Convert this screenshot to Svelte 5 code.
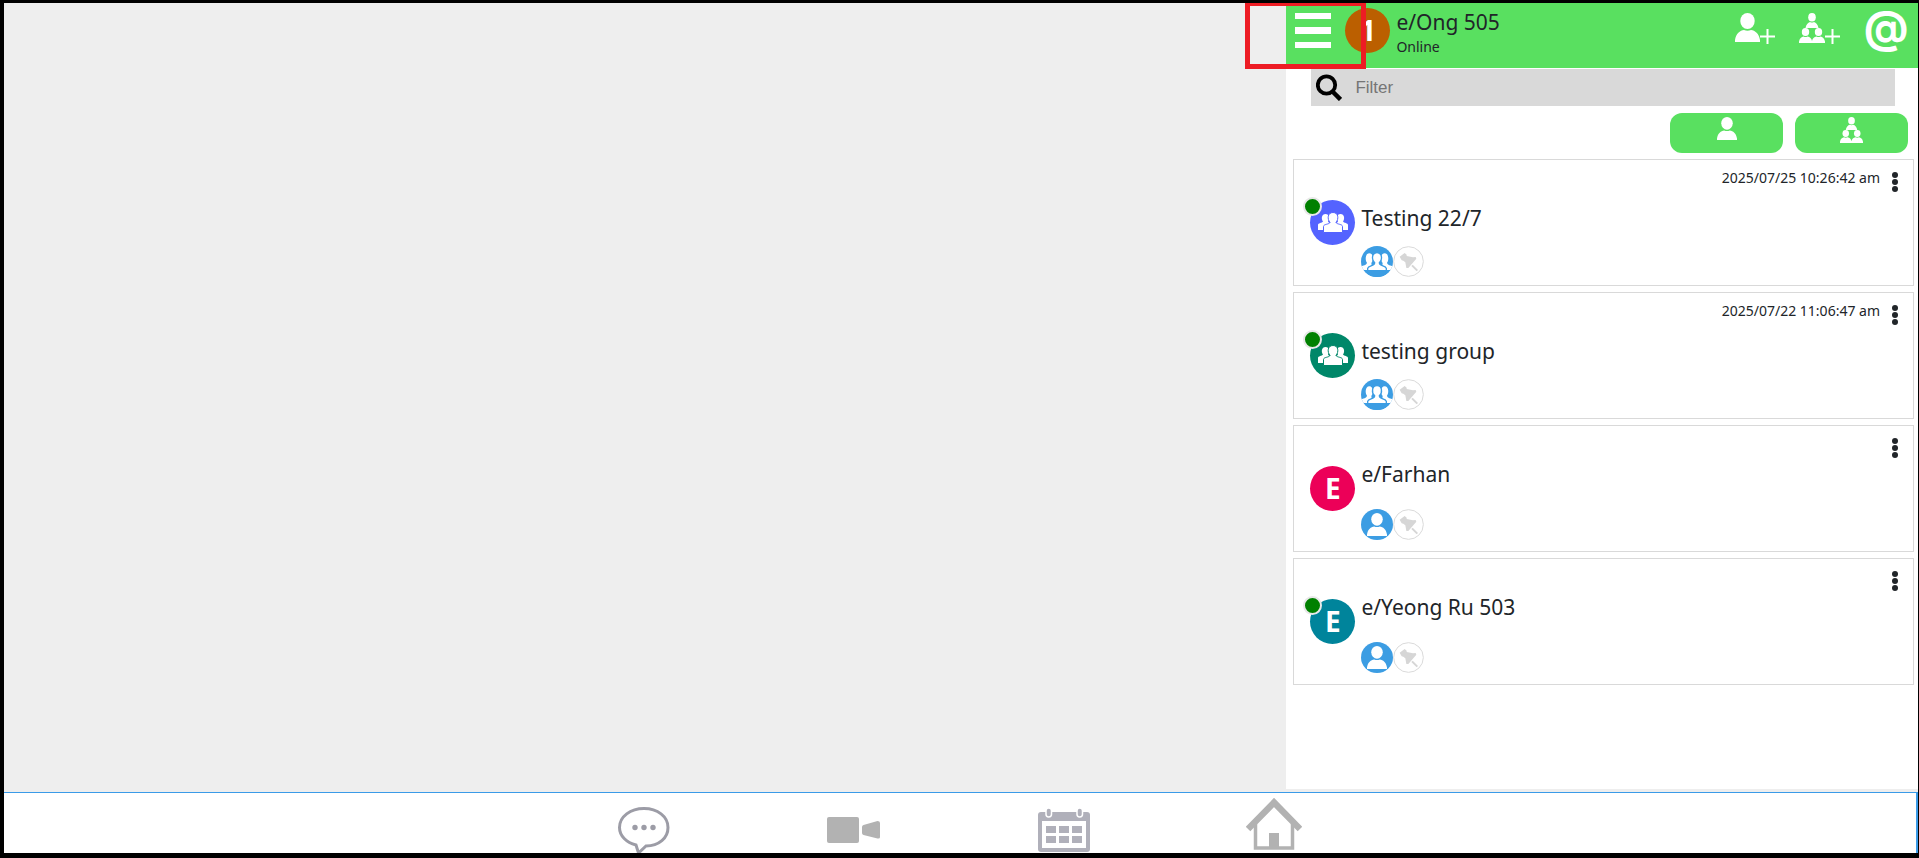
<script>
  const chats = [
    { name: 'Testing 22/7', time: '2025/07/25 10:26:42 am', color: '#5463ff', group: true, online: true },
    { name: 'testing group', time: '2025/07/22 11:06:47 am', color: '#008769', group: true, online: true },
    { name: 'e/Farhan', time: '', color: '#ec0058', group: false, online: false },
    { name: 'e/Yeong Ru 503', time: '', color: '#00849b', group: false, online: true }
  ];
  let filter = $state('');
  const shown = $derived(chats.filter((c) => c.name.toLowerCase().includes(filter.toLowerCase())));
</script>

{#snippet person(w, h)}
  <svg width={w} height={h} viewBox="0 0 25 29" preserveAspectRatio="none" fill="#fff" aria-hidden="true">
    <ellipse cx="12.5" cy="8" rx="7.2" ry="8" />
    <path d="M0 29V27C1 20.500 5 17.500 9 17Q12.500 18.500 16 17C20 17.500 24 20.500 25 27V29Z" />
  </svg>
{/snippet}

{#snippet team(w, h)}
  <svg width={w} height={h} viewBox="0 0 26 30" preserveAspectRatio="none" fill="#fff" aria-hidden="true">
    <ellipse cx="13" cy="4.300" rx="3.800" ry="4.300" />
    <path d="M6.500 15C7 11.500 9 9.500 11 9Q13 10 15 9C17 9.500 19 11.500 19.500 15Z" />
    <ellipse cx="6.500" cy="19" rx="3.700" ry="4" />
    <ellipse cx="19.500" cy="19" rx="3.700" ry="4" />
    <path d="M0 30V28.500C.5 25.500 2.500 24 4.500 23.500Q6.500 24.500 8.500 23.500C11 24 12.500 25.500 13 28C13.500 25.500 15 24 17.500 23.500Q19.500 24.500 21.500 23.500C23.500 24 25.500 25.500 26 28.500V30Z" />
  </svg>
{/snippet}

{#snippet plus()}
  <svg class="plus" width="15" height="15" viewBox="0 0 15 15" aria-hidden="true">
    <path d="M7.500 0V15M0 7.500H15" stroke="#fff" stroke-width="2" />
  </svg>
{/snippet}

{#snippet crowd(bg)}
  <svg width="30" height="21" viewBox="0 0 30 21" fill="#fff" aria-hidden="true">
    <path d="M0 18V13C0 11 4 11 5 9.500C3 7 3.500 2 7.500 2S12 7 10 9.500L12 12V18Z" />
    <path d="M30 18V13C30 11 26 11 25 9.500C27 7 26.500 2 22.500 2S18 7 20 9.500L18 12V18Z" />
    <path d="M5.500 20.500V14.500C5.500 12 11 12.500 12 10.500C9 7 9.500 0.500 15 .5S21 7 18 10.500C19 12.500 24.500 12 24.500 14.500V20.500Z" stroke={bg} stroke-width="1" />
  </svg>
{/snippet}

{#snippet crowdBadge()}
  <svg width="32" height="31" viewBox="0 0 96 93" fill="#fff" aria-hidden="true">
    <path d="M0 72V62C6 57 17 58 18 50C12 44 12 22 25 22S38 44 31 51L34 72Z" />
    <path d="M96 72V62C90 57 79 58 78 50C84 44 84 22 71 22S58 44 65 51L62 72Z" />
    <path d="M20 75V67C22 58 41 61 41 50C31 42 32 20 48 20S65 42 55 50C55 61 74 58 76 67V75Z" stroke="#3c9de3" stroke-width="4" />
    <path d="M0 72H96V93H0Z" fill="#3c9de3" />
  </svg>
{/snippet}

<div class="app">
  <div class="main">
    <main class="stage"></main>
    <aside class="sidebar">
      <header>
        <button class="menu" aria-label="Menu">
          <svg width="36" height="36" viewBox="0 0 36 36" fill="#fff" aria-hidden="true">
            <rect width="36" height="6" /><rect y="14" width="36" height="7" /><rect y="29" width="36" height="6" />
          </svg>
        </button>
        <span class="avatar me">1</span>
        <div class="who">
          <div class="name">e/Ong 505</div>
          <div class="state">Online</div>
        </div>
        <div class="actions">
          <button aria-label="Add contact">{@render person(25, 29)}{@render plus()}</button>
          <button aria-label="Add group">{@render team(26, 30)}{@render plus()}</button>
          <button class="at" aria-label="Mentions">@</button>
        </div>
        <div class="marker"></div>
      </header>

      <label class="search">
        <svg width="26" height="27" viewBox="0 0 26 27" fill="none" stroke="#000" aria-hidden="true">
          <circle cx="10.500" cy="11" r="8.700" stroke-width="3.800" />
          <path d="M16.500 17.500L24.500 25.500" stroke-width="4.500" />
        </svg>
        <input type="text" placeholder="Filter" aria-label="Filter" bind:value={filter} />
      </label>

      <div class="kinds">
        <button aria-label="Contacts">{@render person(20, 23)}</button>
        <button aria-label="Groups">{@render team(23, 26)}</button>
      </div>

      <div class="list">
        {#each shown as chat}
          <article class="card">
            <div class="top">
              <time>{chat.time}</time>
              <button class="more" aria-label="More options">
                <svg width="6" height="20" viewBox="0 0 6 20" fill="#212529" aria-hidden="true">
                  <circle cx="3" cy="3" r="3" /><circle cx="3" cy="10" r="3" /><circle cx="3" cy="17" r="3" />
                </svg>
              </button>
            </div>
            <div class="row">
              <span class="avatar" style="background:{chat.color}">
                {#if chat.group}{@render crowd(chat.color)}{:else}E{/if}
                {#if chat.online}<span class="dot"></span>{/if}
              </span>
              <div class="info" class:group={chat.group}>
                <div class="title">{chat.name}</div>
                <div class="badges">
                  <span class="badge">
                    {#if chat.group}{@render crowdBadge()}{:else}{@render person(20, 23)}{/if}
                  </span>
                  <button class="pin" aria-label="Pin chat">
                    <svg width="31" height="31" viewBox="0 0 93 93" aria-hidden="true">
                      <circle cx="46.500" cy="46.500" r="44.500" fill="#fff" stroke="#dadada" stroke-width="3" />
                      <path d="M20 32L35 21L41 26L41 30L60 34L68 33L70 38L46 66L40 66L37 49L31 44L26 43Z" fill="#d6d6d6" />
                      <path d="M57 58L73 74" stroke="#d6d6d6" stroke-width="6" />
                    </svg>
                  </button>
                </div>
              </div>
            </div>
          </article>
        {/each}
      </div>
    </aside>
  </div>

  <nav>
    <a href="#chat" aria-label="Chat">
      <svg width="52" height="48" viewBox="0 0 52 48" fill="none" aria-hidden="true">
        <path d="M26 1.500C12.500 1.500 1.500 9.500 1.500 20.500C1.500 29 8.500 35.500 18 38L20.500 46L28 39C41 39 50 31 50 20.500C50 9.500 39.500 1.500 26 1.500Z" stroke="#9c9ca6" stroke-width="3" />
        <g fill="#9c9ca6"><circle cx="17" cy="20.500" r="2.700" /><circle cx="26" cy="20.500" r="2.700" /><circle cx="35" cy="20.500" r="2.700" /></g>
      </svg>
    </a>
    <a href="#video" aria-label="Video call">
      <svg width="53" height="46" viewBox="0 0 53 46" fill="#b2b2b2" aria-hidden="true">
        <rect y="10" width="32" height="26" rx="2" />
        <path d="M36.500 18L50.500 14Q53 14 53 16V30Q53 32 50.500 31.500L36.500 28Q35 27.500 35 26V20Q35 18.500 36.500 18Z" />
      </svg>
    </a>
    <a href="#calendar" aria-label="Calendar">
      <svg width="52" height="46" viewBox="0 0 52 46" fill="#b0b0ba" aria-hidden="true">
        <rect y="5" width="52" height="40" rx="3" />
        <rect x="4" y="14" width="44" height="27" fill="#fff" />
        <rect x="8" y="1" width="5.500" height="9" rx="2.700" stroke="#fff" stroke-width="1.500" />
        <rect x="39" y="1" width="5.500" height="9" rx="2.700" stroke="#fff" stroke-width="1.500" />
        <path d="M8 19H18V26H8ZM21 19H31V26H21ZM34 19H44V26H34ZM8 29H18V36H8ZM21 29H31V36H21ZM34 29H44V36H34Z" />
      </svg>
    </a>
    <a href="#home" aria-label="Home">
      <svg width="56" height="54" viewBox="0 0 56 54" fill="none" stroke="#b2b2b2" aria-hidden="true">
        <path d="M2 32L28 5.500L54 32" stroke-width="6.500" />
        <path d="M9.500 27V51H46.500V27" stroke-width="3.500" />
        <rect x="23" y="36" width="10" height="15" fill="#b2b2b2" stroke="none" />
      </svg>
    </a>
  </nav>
</div>

<style>
  :global(body) { margin: 0; background: #000; }
  * { box-sizing: border-box; }
  svg { display: block; flex: none; }
  button { display: flex; align-items: center; justify-content: center; padding: 0; border: 0; background: none; color: inherit; font: inherit; cursor: pointer; }
  .app {
    display: flex;
    flex-direction: column;
    height: 100vh;
    min-height: 760px;
    border: solid #000;
    border-width: 3px 1px 5px 4px;
    background: #eee;
    color: #212529;
    font-family: "Noto Sans", "Segoe UI", sans-serif;
  }
  .main { display: flex; flex: 1; min-height: 0; padding-bottom: 3px; }
  .stage { flex: 1; background: #eee; }
  .sidebar { display: flex; flex-direction: column; width: 33%; background: #fff; }

  header { position: relative; display: flex; align-items: flex-start; height: 65px; padding: 5px 10px 0 9px; background: #59e060; }
  .menu { padding-top: 5px; margin-right: 14px; }
  .avatar { position: relative; display: flex; flex: none; align-items: center; justify-content: center; width: 45px; height: 45px; border-radius: 50%; color: #fff; font: bold 28px/45px "Noto Sans", sans-serif; }
  .me { background: #bb5f00; }
  .who { flex: 1; margin-left: 6px; }
  .name { font-size: 21px; line-height: 28px; }
  .state { font-size: 14px; line-height: 22px; }
  .actions { display: flex; align-items: flex-start; gap: 24px; }
  .actions button { align-items: flex-start; padding-top: 5px; }
  .plus { margin-top: 16px; }
  .actions .at { width: 44px; height: 45px; padding: 0; font: bold 44px/38px Inter, sans-serif; color: #fff; }
  .marker { position: absolute; top: 0; left: -41px; width: 121px; height: 66px; border: 5px solid #ed1c24; border-top-width: 3px; pointer-events: none; z-index: 1; }

  .search { display: flex; align-items: center; height: 37px; margin: 1px 23px 0 25px; padding-left: 5px; background: #d9d9d9; }
  .search input { flex: 1; min-width: 0; margin-left: 13px; padding: 1px 0 0; border: 0; outline: 0; background: none; font: 17px/24px "Liberation Sans", Arial, sans-serif; }
  .search input::placeholder { color: #757575; opacity: 1; }

  .kinds { display: flex; justify-content: flex-end; gap: 12px; padding: 7px 10px 6px; }
  .kinds button { align-items: flex-start; width: 113px; height: 40px; padding-top: 4px; border-radius: 12px; background: #59e060; }

  .list { display: flex; flex-direction: column; gap: 6px; padding: 0 4px 0 7px; }
  .card { min-height: 127px; border: 1px solid #d9d9d9; padding: 0 15px 0 16px; }
  .top { display: flex; justify-content: flex-end; gap: 12px; height: 30px; }
  time { padding-top: 8px; font-size: 14px; line-height: 20px; }
  .more { align-self: flex-start; padding-top: 12px; }
  .row { display: flex; gap: 6px; }
  .row .avatar { margin-top: 10px; }
  .dot { position: absolute; top: -3px; left: -7px; width: 19px; height: 19px; border: 2px solid #e8e8e8; border-radius: 50%; background: #008000; }
  .info { display: flex; flex-direction: column; gap: 17px; }
  .info.group { padding-top: 10px; gap: 10px; }
  .title { font-size: 21px; line-height: 36px; }
  .badges { display: flex; }
  .badge { display: flex; align-items: center; justify-content: center; overflow: hidden; width: 32px; height: 31px; border-radius: 50%; background: #3c9de3; }

  nav { display: flex; justify-content: center; height: 61px; padding-right: 2px; border-top: 1px solid #3a9be8; border-right: 2px solid #3a9be8; background: #fff; overflow: hidden; }
  nav a { display: flex; justify-content: center; align-items: flex-start; width: 11%; padding-top: 14px; }
  nav a:last-child { padding-top: 4px; }
</style>
